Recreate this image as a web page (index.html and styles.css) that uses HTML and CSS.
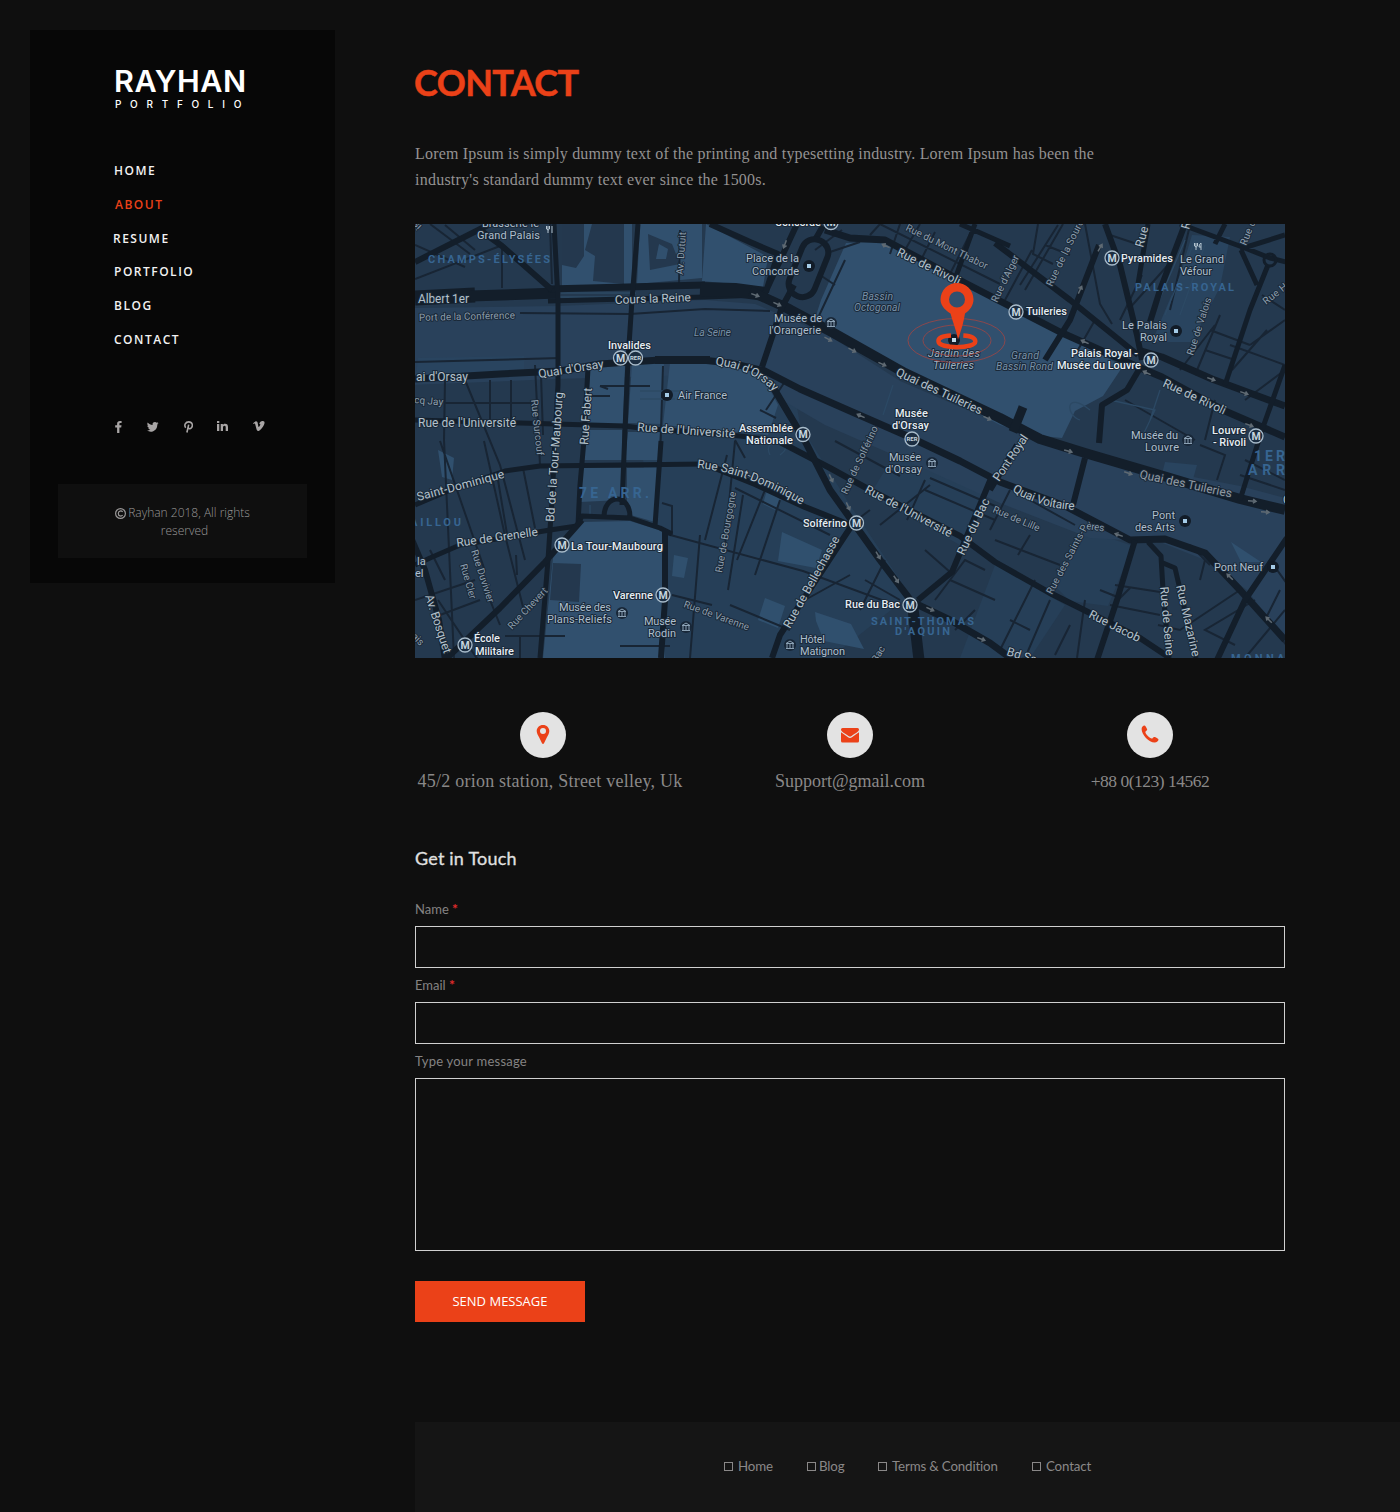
FILE: index.html
```html
<!DOCTYPE html>
<html lang="en">
<head>
<meta charset="utf-8">
<title>Rayhan Portfolio - Contact</title>
<link rel="stylesheet" href="styles.css">
</head>
<body>
<div class="page">
  <aside class="sidebar">
    <a class="logo" href="#">
      <span class="logo-name">RAYHAN</span>
      <span class="logo-sub">PORTFOLIO</span>
    </a>
    <nav class="menu">
      <a href="#">HOME</a>
      <a href="#" class="active">ABOUT</a>
      <a href="#" class="resume">RESUME</a>
      <a href="#">PORTFOLIO</a>
      <a href="#">BLOG</a>
      <a href="#">CONTACT</a>
    </nav>
    <div class="social">
      <svg width="7" height="12" viewBox="0 0 7 12"><path d="M6.600 0v2H5.400c-.8 0-1 .4-1 1v1.300h2.100l-.3 2.100H4.400V12H2.100V6.400H.2V4.300h1.900V2.700C2.100.9 3.200 0 4.900 0z"/></svg>
      <svg width="12" height="10" viewBox="0 0 12 10"><path d="M11.500 1.200c-.3.500-.7.900-1.200 1.200.2 4.300-3 7.300-6.600 7.300C2.300 9.700 1.100 9.300 0 8.600c1.300.1 2.400-.2 3.400-1-1-.1-1.900-.7-2.200-1.600h1C1 5.700.3 4.800.3 3.600l1 .3C.2 3 .1 1.700.7.600c1.300 1.500 2.900 2.300 4.900 2.400C5.200 1.200 6.400 0 8 0c.7 0 1.300.3 1.700.7L11.200.2c-.2.500-.5.900-1 1.200z"/></svg>
      <svg width="9" height="12" viewBox="0 0 9 12"><path fill="none" stroke="#a8a5a5" stroke-width="1.600" d="M1.700 6.700C-.2 4.300 1.400.9 4.800.9c3.600 0 4.400 3.800 2.600 5.900-1.300 1.500-2.900.9-3-.1M4.700 3.600 2.900 11.500"/></svg>
      <svg class="raised" width="11" height="10" viewBox="0 0 11 10"><path d="M0 0h2.300v2H0zM0 3h2.300v7H0zM3.700 3h2.200v.9C6.400 3.200 7 2.800 8 2.800c2.200 0 3 1.200 3 3.300V10H8.700V6.500c0-1-.2-1.700-1.200-1.700S6 5.500 6 6.500V10H3.700z"/></svg>
      <svg class="raised" width="12" height="10" viewBox="0 0 12 10"><path d="M0 2.300 2.700.2C4 0 4.500.8 4.700 2l.6 3.200c.2 1 .6 1 1.200 0 1-1.600 1.200-2.400-.3-2C6.800.9 8.200-.1 9.900 0c2 .2 2 2.100 1 4.100C9.700 6.500 8 8.500 6.500 9.600c-1.300.9-2.500.3-2.900-1L2.200 3.200C2 2.400 1.500 2.400.6 3z"/></svg>
    </div>
    <p class="copyright"><svg width="11" height="11" viewBox="0 0 11 11"><circle cx="5.500" cy="5.500" r="4.900"/><path d="M7.600 4C6.600 2.400 3.300 2.600 3.300 5.500s3.300 3.100 4.300 1.500"/></svg> Rayhan 2018, All rights<br><span>reserved</span></p>
  </aside>

  <main class="main">
    <div class="content">
      <h1>CONTACT</h1>
      <p class="intro"><span class="l1">Lorem Ipsum is simply dummy text of the printing and typesetting industry. Lorem Ipsum has been the</span><br><span class="l2">industry's standard dummy text ever since the 1500s.</span></p>

      <svg class="map" width="870" height="434" viewBox="415 224 870 434">
        <defs>
          <g id="metro"><circle r="7" fill="#1c2e42" stroke="#a9bccb" stroke-width="1.300"/><text class="badge" x="-4.500" y="3.700" textLength="9">M</text></g>
          <g id="rer"><circle r="7" fill="#1c2e42" stroke="#a9bccb" stroke-width="1.300"/><text class="badge rer" x="-5.500" y="2.300" textLength="11" lengthAdjust="spacingAndGlyphs">RER</text></g>
          <g id="spot"><circle r="6" fill="#121c28"/><path fill="#a5cce8" d="M-2-2h4v4h-4z"/></g>
          <g id="museum"><circle r="6" fill="#182738"/><path fill="none" stroke="#8ca2b5" d="M-4-1.500 0-4l4 2.500zM-3-1v4M0-1v4M3-1v4M-4 3.500h8"/></g>
          <g id="arrow"><path fill="none" stroke="#5f6a73" stroke-width="1.500" d="M-4 0h7M1-2l3 2-3 2"/></g>
        </defs>
        <path fill="#24394f" d="M415 224h870v434H415z"/>
        <!-- blocks -->
        <g fill="#263f58">
          <path d="M635 365h155l10 60 50 80 60 90-80 63H660z"/>
          <path d="M900 445l90 40-30 60-90-50zM1085 530l48 16-25 60-38-5-15-15zM995 565l70 40-35 53h-70z"/>
        </g>
        <!-- river -->
        <path fill="#29415b" d="M415 308l143-2 147-6 50 4 75 32 70 45 100 43 85 32 155 30 45 12v142l-38-50-42-30-45-18-70-4-90-35-95-43-80-35-65-38-60-12-145 4-143 6z"/>
        <!-- parks and squares -->
        <g fill="#31506e">
          <path d="M562 224h70v60l-70 5zM640 224h62v54l-65 6zM706 224l62 33-5 30-61-6zM846 243l40-1 79 42 80 42 78 40-20 30-28 15-13 27-30-3-32-10-90-47-97-53 8-25zM590 370l35-6-2 60h-37zM632 364l32-2-3 62-33-1zM670 363h60l30 8 18 34-10 30-105-10zM584 430h38v30h-40zM628 432h32l-2 28h-33zM581 468h40v32l-41 2zM627 468h32l-4 54-28-8zM580 522l50-1 32 10 3 127H543l10-100z"/>
        </g>
        <path fill="#29445f" d="M418 358l106-2v15l-108 4zM1165 462l32 3-7 25-30-8zM1180 275l12-40 38 2-10 50-28 55h-40z"/>
        <path fill="#30506e" d="M782 532l40 18-6 18-38-7zM765 598l20 8-7 22-20-8zM815 612l36 12 13 25-40-8-8-20zM767 490l14 10-6 10-12-6zM674 555l14 3-4 20-12-2zM1231 542l30 20h-20zM438 450l16 8-2 22-10-3z"/>
        <path fill="#24384e" d="M562 224h22v32l-8 12-14-3zM592 224h32v60l-31-3 2-25-10-6zM648 234l24 10 8 20-30 6zM553 563l28 1-2 38-29-2z"/>
        <path fill="#31506e" d="M659 244l9 5-2 10h-10z"/>
        <!-- side streets -->
        <g fill="none" stroke="#182534" stroke-width="2">
          <path d="M415 245l50 22M500 246l-85 33M502 246v42M550 224l2 60M430 224l40 30M445 225l30 25M680 230l-1 55M415 362l145-4M520 313l110 1 75-5 65 2M445 380l-1 60 10 218M465 380l35 85 25 95M490 380v45M511 380v40M535 365l5 100M445 403h90M440 441l45 130M484 441l20 90 20 80M523 468l12 60M498 480l10 60M516 555l1 20M438 600l40 60M430 550l15 30M480 575l20 50M415 600l60-20M440 615l40-15M505 636h60M520 636v22"/>
          <path d="M541 375l2 60M600 386l8 3M590 396h20M662 503l10 3v30M663 366l-3 95M663 533l140 38 95 35M700 535l-10 123M735 441l-10 105M765 490l-28 70M780 500l-25 75M735 488l95 47M705 540l22-85M730 605l60 25M728 590l15-95M620 646h50M672 595l40 10M600 386h50"/>
          <path d="M790 305l20 15M815 250l27-20M820 275l15 10M830 252l30-10M845 260l-28 60M870 235l10-11M900 224l-10 30M905 250l15-26M920 262l15-30M950 274l25-50M880 224l120 60M760 410l16 8M735 440l10 18M766 410l20-30M835 441l65 35M925 480l-18 40M870 510l-20 15M880 525l50-40M925 490l70 30M930 478l65 28M850 575l-45 25M865 580l35 20M885 560l-25 50M925 550l25 22M935 600l30-40 20 10M950 580l45 20M975 610l-20 20"/>
          <path d="M1005 300l27-50M1025 290l38-66M1085 224l15 80 12 20M1038 224l-5 30 20 10M1058 225l-38 60M1120 320l22-45M1110 235l30 10M1045 245l25 10M1128 310l40-45M1170 310l20-85M1215 325l-35 45M1210 330l40 15M1205 350l30 10M1195 375l25-60M1250 345l35-25M1230 345l55 20M1232 370l35-40M1215 400l-10 40M1245 400l40-30M1262 295l23 15M1075 355l20-35M1125 400l70 40M1200 445l25 10-8 25M1240 475l45 15M1245 460l40 20"/>
          <path d="M995 540l65 25M1010 490l-20 40M1030 535l-12 20M1030 500l45 25M1115 585l45 7M1110 605l50 10M1240 590l-60 40-22-5M1255 600l-50 30 30 15M1260 610l30 40M1270 560l25 35M1285 610l-40 48M1050 600l-25 58M1010 620l20 10M1000 650l35-70M1085 600l-8 58M1070 625l-15 30M1100 590l20 8 10-10M1205 560l-5 20M1280 590l-15 30M1190 545l20 20"/>
        </g>
        <g fill="none" stroke="#2c4964" stroke-width="1.300">
          <path d="M560 297h75M561 293h75M1110 400l45 10-12 25M1090 410c-25-20-25 5-10 10M1160 390l-10 30M770 455c-10-20 30-15 10 0M893 385l-10 30M1185 240l-30 70M1195 240l-30 75M1205 245l-25 70M640 391h40M640 399h35M590 505v10"/>
        </g>
        <!-- main roads -->
        <g fill="none" stroke="#131e2a" stroke-width="6" stroke-linejoin="round">
          <path stroke-width="15" d="M415 298l60-3"/><path stroke-width="11" d="M470 296l88-3"/>
          <path stroke-width="7" d="M548 289l157-4"/><path stroke-width="5" d="M548 301l157-4 55-2"/>
          <path stroke-width="14" d="M700 289l35 1 30 4"/>
          <path stroke-width="10" d="M750 291l35 16 45 24 75 42 95 45 40 21 45 14 75 22 80 24 45 11"/>
          <path stroke-width="7" d="M415 379l85-5 60-3 40-7 60-4h42l28 3 35 8 35 18 50 22 55 24 55 26 40 21 65 24 65 34 35-1 40 14 35 37 45 50"/>
          <path stroke-width="8" d="M655 360h55"/>
          <path stroke-width="5" d="M415 420l105 3 105 3 15 2 100 8 40 5"/>
          <path d="M780 442l50 26 40 22 90 46 35 26 55 31 90 45 30 20"/>
          <path stroke-width="5" d="M415 505l40-17 50-17 35-5 165-2"/><path d="M705 464l50 20 50 23 35 14 20 9"/>
          <path stroke-width="7" d="M770 382l35 59 25 49 25 35 25 35 32 42 38 18 40 23 30 22"/><path stroke-width="11" d="M912 600l7 60"/>
          <path stroke-width="5" d="M554 224l4 76v85l-3 55-3 60-4 60-8 98M638 224l-6 76-4 60-3 70-3 75M588 368l-4 72-4 45-2 40"/>
          <path stroke-width="5" d="M415 565l15-7 30-13 90-15 27-4 5-10 48 2 30 10 12 6M661 441l-6 85M604 517c0-24 26-24 26 0"/>
          <path d="M665 530v70l-4 58M582 520l-37 42-45 46-55 52M410 535l15 35 14 50 6 40"/>
          <path d="M918 600l34-28 40-96M852 525l-72 110-8 23M1017 445l-27 45M1085 458l-12 47"/>
          <path d="M415 262l75-38M480 230l22 16 50 44"/>
          <path d="M762 367l20-60 12-22M765 293l32-69M710 224l40 18 28 12-12 38M823 226l-8 14"/>
          <rect x="795" y="238" width="27" height="60" rx="13" transform="rotate(22 808 268)"/>
          <path stroke-width="7" d="M825 230l25 8 35 2 80 43 95 49 78 35 24 10 63 34 60 26M1138 350l24 7 50 22 73 27"/>
          <path d="M1105 224l15 41 17 70 5 25M995 243l75 57 68 55M1099 245l-29 75-25 40M1185 224l-25 66-10 32"/>
          <path stroke-width="5" d="M975 224l-20 55M960 224l50 22M1180 224l65 24 25 10 20 5M1240 249l45-14M1241 250l16 35M1268 265l-18 45-25 75M1285 365l-23 65-22 70M1148 224l-10 60M1225 224l-10 20"/>
          <circle cx="1270" cy="260" r="6" stroke-width="3"/>
          <path stroke-width="9" d="M1023 407l-10 25"/><path d="M1140 368l-13 22-25 15-3 38"/>
          <path d="M1287 538l-42 62-28 60M1135 540l-18 60-20 60"/>
          <path stroke-width="5" d="M1148 542l13 14 2 34 6 68M1163 563l12 5 21 90"/>
        </g>
        <g>
          <use href="#arrow" transform="translate(755 295) rotate(20)"/><use href="#arrow" transform="translate(777 304) rotate(25)"/>
          <use href="#arrow" transform="translate(828 339) rotate(28)"/><use href="#arrow" transform="translate(852 350) rotate(28)"/>
          <use href="#arrow" transform="translate(882 364) rotate(25)"/><use href="#arrow" transform="translate(987 418) rotate(25)"/>
          <use href="#arrow" transform="translate(861 416) rotate(205)"/><use href="#arrow" transform="translate(886 246) rotate(205)"/>
          <use href="#arrow" transform="translate(785 244) rotate(110)"/><use href="#arrow" transform="translate(1085 342) rotate(205)"/>
          <use href="#arrow" transform="translate(1080 290) rotate(-65)"/><use href="#arrow" transform="translate(1100 248) rotate(-60)"/>
          <use href="#arrow" transform="translate(1211 379) rotate(20)"/><use href="#arrow" transform="translate(1244 393) rotate(20)"/>
          <use href="#arrow" transform="translate(1147 373) rotate(205)"/><use href="#arrow" transform="translate(1249 425) rotate(20)"/>
          <use href="#arrow" transform="translate(1068 451) rotate(15)"/><use href="#arrow" transform="translate(1128 473) rotate(18)"/>
          <use href="#arrow" transform="translate(1252 501) rotate(5)"/><use href="#arrow" transform="translate(1265 512) rotate(5)"/>
          <use href="#arrow" transform="translate(831 478) rotate(65)"/><use href="#arrow" transform="translate(848 506) rotate(65)"/>
          <use href="#arrow" transform="translate(878 555) rotate(60)"/><use href="#arrow" transform="translate(896 579) rotate(55)"/>
          <use href="#arrow" transform="translate(930 609) rotate(25)"/><use href="#arrow" transform="translate(981 639) rotate(20)"/>
          <use href="#arrow" transform="translate(1119 535) rotate(200)"/><use href="#arrow" transform="translate(1230 577) rotate(225)"/><use href="#arrow" transform="translate(1269 620) rotate(225)"/>
        </g>
        <!-- district names -->
        <g class="district">
          <text x="428" y="263" textLength="122">CHAMPS-ÉLYSÉES</text>
          <text x="1135" y="291" textLength="99">PALAIS-ROYAL</text>
          <text x="871" y="625" textLength="103">SAINT-THOMAS</text>
          <text x="895" y="635" textLength="55">D'AQUIN</text>
          <text x="410" y="526" textLength="51">AILLOU</text>
          <text x="1231" y="662" textLength="60">MONNAI</text>
          <g class="large">
            <text x="579" y="498" textLength="70">7E ARR.</text>
            <text x="1254" y="461" textLength="31">1ER</text>
            <text x="1248" y="475" textLength="37">ARR</text>
          </g>
        </g>
        <!-- street names -->
        <g class="street">
          <text x="418" y="303" textLength="51">Albert 1er</text>
          <text transform="translate(615 304) rotate(-2)" textLength="76">Cours la Reine</text>
          <text x="416" y="381" textLength="52">ai d'Orsay</text>
          <text transform="translate(539 378) rotate(-9)" textLength="66">Quai d'Orsay</text>
          <text x="418" y="427" textLength="98">Rue de l'Université</text>
          <text transform="translate(637 431) rotate(4)" textLength="98">Rue de l'Université</text>
          <text transform="translate(554 522) rotate(-86)" textLength="130">Bd de la Tour-Maubourg</text>
          <text transform="translate(588 445) rotate(-86)" textLength="57">Rue Fabert</text>
          <path id="orsay" fill="none" d="M715 365q38 4 60 28"/>
          <text textLength="66"><textPath href="#orsay">Quai d'Orsay</textPath></text>
          <text transform="translate(896 255) rotate(26)" textLength="69">Rue de Rivoli</text>
          <text transform="translate(895 375) rotate(25)" textLength="94">Quai des Tuileries</text>
          <text transform="translate(1162 386) rotate(25)" textLength="68">Rue de Rivoli</text>
          <text transform="translate(1143 248) rotate(-75)" textLength="21">Rue</text>
          <text transform="translate(1189 230) rotate(-75)">Rue</text>
          <text transform="translate(418 501) rotate(-15)" textLength="90">Saint-Dominique</text>
          <text transform="translate(457 547) rotate(-8)" textLength="82">Rue de Grenelle</text>
          <text transform="translate(425 596) rotate(72)" textLength="61">Av. Bosquet</text>
          <path id="domin" fill="none" d="M697 468q50 4 106 38"/>
          <text textLength="112"><textPath href="#domin">Rue Saint-Dominique</textPath></text>
          <text transform="translate(864 492) rotate(28)" textLength="97">Rue de l'Université</text>
          <text transform="translate(964 556) rotate(-65)" textLength="61">Rue du Bac</text>
          <text transform="translate(790 629) rotate(-61)" textLength="103">Rue de Bellechasse</text>
          <text transform="translate(999 482) rotate(-56)" textLength="53">Pont Royal</text>
          <path id="volt" fill="none" d="M1012 491q28 18 66 19"/>
          <text textLength="66"><textPath href="#volt">Quai Voltaire</textPath></text>
          <text transform="translate(1139 478) rotate(12)" textLength="94" fill="#929ba3">Quai des Tuileries</text>
          <text transform="translate(1088 617) rotate(27)" textLength="56">Rue Jacob</text>
          <text transform="translate(1160 587) rotate(85)" textLength="69">Rue de Seine</text>
          <text transform="translate(1176 586) rotate(77)" textLength="73">Rue Mazarine</text>
          <text transform="translate(1006 655) rotate(17)">Bd Sa</text>
          <text x="1283" y="504">Q</text>
        </g>
        <g class="street minor">
          <text transform="translate(419 321) rotate(-1.500)" textLength="96">Port de la Conférence</text>
          <text transform="translate(683 275) rotate(-86)" textLength="43">Av. Dutuit</text>
          <text transform="translate(414 403) rotate(5)" textLength="29">cq Jay</text>
          <text transform="translate(531 400) rotate(84)" textLength="56">Rue Surcouf</text>
          <text transform="translate(905 230) rotate(26)" textLength="90">Rue du Mont Thabor</text>
          <text transform="translate(847 495) rotate(-65)" textLength="74">Rue de Solférino</text>
          <text transform="translate(997 303) rotate(-64)" textLength="51">Rue d'Alger</text>
          <text transform="translate(1052 287) rotate(-64)" textLength="73">Rue de la Sourd</text>
          <text transform="translate(1193 356) rotate(-72)" textLength="60">Rue de Valois</text>
          <text transform="translate(1266 305) rotate(-38)" textLength="28">Rue H</text>
          <text transform="translate(1246 246) rotate(-68)" textLength="26">Rue d</text>
          <text transform="translate(460 565) rotate(74)" textLength="36">Rue Cler</text>
          <text transform="translate(471 551) rotate(72)" textLength="55">Rue Duvivier</text>
          <text transform="translate(512 630) rotate(-47)" textLength="53">Rue Chevert</text>
          <text transform="translate(683 607) rotate(20)" textLength="69">Rue de Varenne</text>
          <text transform="translate(722 573) rotate(-80)" textLength="82">Rue de Bourgogne</text>
          <text transform="translate(992 512) rotate(23)" textLength="50">Rue de Lille</text>
          <text transform="translate(1052 595) rotate(-62)" textLength="77">Rue des Saints-P</text>
          <text transform="translate(1086 529) rotate(8)" textLength="18">ères</text>
          <text transform="translate(411 637) rotate(45)">ais</text>
          <text transform="translate(422 226) rotate(-135)">is</text>
          <text transform="translate(877 663) rotate(-60)">Bac</text>
        </g>
        <!-- places -->
        <g class="place">
          <text x="482" y="227" textLength="57">Brasserie le</text><text x="477" y="238.500" textLength="63">Grand Palais</text>
          <text x="678" y="399" textLength="49">Air France</text>
          <text x="746" y="262" textLength="53">Place de la</text><text x="752" y="275" textLength="47">Concorde</text>
          <text x="774" y="322" textLength="48">Musée de</text><text x="769" y="334" textLength="52">l'Orangerie</text>
          <text x="889" y="461" textLength="32">Musée</text><text x="885" y="473" textLength="37">d'Orsay</text>
          <text x="1180" y="263" textLength="44">Le Grand</text><text x="1180" y="275" textLength="32">Véfour</text>
          <text x="1122" y="329" textLength="45">Le Palais</text><text x="1140" y="341" textLength="27">Royal</text>
          <text x="1131" y="439" textLength="47">Musée du</text><text x="1145" y="451" textLength="34">Louvre</text>
          <text x="417" y="565">la</text><text x="415" y="577">el</text>
          <text x="559" y="611" textLength="52">Musée des</text><text x="547" y="623" textLength="65">Plans-Reliefs</text>
          <text x="644" y="625" textLength="32">Musée</text><text x="648" y="637" textLength="28">Rodin</text>
          <text x="800" y="643" textLength="25">Hôtel</text><text x="800" y="655" textLength="45">Matignon</text>
          <text x="1152" y="519" textLength="23">Pont</text><text x="1135" y="531" textLength="40">des Arts</text>
          <text x="1214" y="570.500" textLength="49">Pont Neuf</text>
        </g>
        <g class="place italic">
          <text x="694" y="335.500" textLength="37">La Seine</text>
          <text x="862" y="300" textLength="31">Bassin</text><text x="854" y="311" textLength="46">Octogonal</text>
          <text x="1011" y="359" textLength="28">Grand</text><text x="996" y="370" textLength="57">Bassin Rond</text>
        </g>
        <g class="station">
          <text x="608" y="348.500" textLength="43">Invalides</text>
          <text x="775" y="226" textLength="46">Concorde</text>
          <text x="895" y="417" textLength="33">Musée</text><text x="892" y="429" textLength="37">d'Orsay</text>
          <text x="739" y="432" textLength="54">Assemblée</text><text x="746" y="444" textLength="47">Nationale</text>
          <text x="1121" y="262" textLength="52">Pyramides</text>
          <text x="1026" y="315" textLength="41">Tuileries</text>
          <text x="1071" y="357" textLength="67">Palais Royal -</text><text x="1057" y="369" textLength="84">Musée du Louvre</text>
          <text x="1212" y="434" textLength="34">Louvre</text><text x="1213" y="446" textLength="33">- Rivoli</text>
          <text x="571" y="550" textLength="92">La Tour-Maubourg</text>
          <text x="613" y="599" textLength="40">Varenne</text>
          <text x="474" y="642" textLength="26">École</text><text x="475" y="655" textLength="39">Militaire</text>
          <text x="803" y="527" textLength="44">Solférino</text>
          <text x="845" y="608" textLength="55">Rue du Bac</text>
        </g>
        <use href="#metro" x="620.500" y="358"/><use href="#rer" x="635.500" y="358"/><use href="#rer" x="912" y="439"/>
        <use href="#metro" x="831" y="222.500"/><use href="#metro" x="803" y="434.500"/><use href="#metro" x="1112" y="258"/>
        <use href="#metro" x="1016" y="312"/><use href="#metro" x="1151" y="360"/><use href="#metro" x="1256" y="436"/>
        <use href="#metro" x="562" y="545"/><use href="#metro" x="663" y="595"/><use href="#metro" x="465" y="645"/>
        <use href="#metro" x="856.500" y="523"/><use href="#metro" x="910" y="605"/>
        <use href="#spot" x="667" y="395"/><use href="#spot" x="809" y="266"/><use href="#spot" x="1176" y="331"/>
        <use href="#spot" x="1185" y="521"/><use href="#spot" x="1273" y="567"/>
        <use href="#museum" x="831" y="323"/><use href="#museum" x="932" y="463"/><use href="#museum" x="1188" y="440"/>
        <use href="#museum" x="622" y="613"/><use href="#museum" x="686" y="627"/><use href="#museum" x="790" y="645"/>
        <path fill="none" stroke="#b4c4d0" d="M1194.500 243v3q2 2 3 0v-3M1196 243v7M1201 250v-7q-2 1-2 4h2M546.500 226v3q2 2 3 0v-3M548 226v7M552 233v-7"/>
        <!-- current location -->
        <circle cx="954" cy="340" r="6" fill="#121c28"/>
        <g class="place italic bright"><text x="928" y="357" textLength="52">Jardin des</text><text x="933" y="369" textLength="41">Tuileries</text></g>
        <g fill="none" stroke="#a84440" stroke-opacity=".75"><ellipse cx="957" cy="340.500" rx="34" ry="15.500"/><ellipse cx="956.500" cy="340.500" rx="48.500" ry="22"/></g>
        <path fill="none" stroke="#eb4118" stroke-width="4.500" d="M951 335.500C942 336 938 338 938.500 341.500 939 349 975 349 975.300 341.500c0-3.500-4-5.500-12-6"/>
        <path fill="#c2d9e8" d="M952 338h4v4h-4z"/>
        <path fill="#eb4118" fill-rule="evenodd" d="M957 283a16.500 16.500 0 0 1 16.500 16.500c0 6-4 11-8.500 14-1.500 9-3.500 16-7 26-2-10-5.500-18-7.500-26-4-2.500-10-7-10-14A16.500 16.500 0 0 1 957 283zm0 8.500a8 8 0 1 0 0 16 8 8 0 1 0 0-16z"/>
      </svg>

      <div class="info">
        <div class="info-item address">
          <span class="circle"><svg width="14" height="19" viewBox="0 0 14 19"><path fill-rule="evenodd" d="M7 0c3.700 0 6.300 2.700 6.300 6 0 2.500-1.500 4.500-2.500 6.600L8 18.300c-.5.800-1.500.8-2 0L3.200 12.600C2.200 10.500.7 8.500.7 6 .7 2.700 3.300 0 7 0zm0 3.100a3 3 0 1 0 0 6 3 3 0 1 0 0-6z"/></svg></span>
          <span class="t-address">45/2 orion station, Street velley, Uk</span>
        </div>
        <div class="info-item mail">
          <span class="circle"><svg width="18" height="15" viewBox="0 0 18 15"><path d="M1.500 0h15Q18 0 18 1.500C18 3.200 15.500 4.700 10.500 8 9.500 8.800 8.500 8.800 7.500 8 2.500 4.700 0 3.200 0 1.500Q0 0 1.500 0zM0 4.300c2 1.600 4.500 3 6.700 4.700 1.800 1.300 2.800 1.300 4.600 0 2.200-1.700 4.700-3.100 6.700-4.700v8.700q0 1.500-1.500 1.500h-15Q0 14.500 0 13z"/></svg></span>
          <span class="t-mail">Support@gmail.com</span>
        </div>
        <div class="info-item phone">
          <span class="circle"><svg width="18" height="18" viewBox="0 0 18 18"><path d="M.6 4C.6 1.800 2.300.5 3.300.5c1.200 0 1.600 1.400 2.700 3.500.8 1.500-1.600 1.800-1.600 3.300 0 1.700 4.600 6.300 6.300 6.300 1.300 0 1.600-2.400 3.200-1.500 2.300 1.200 3.600 1.600 3.600 2.700 0 1-1.700 2.700-3.900 2.700C7.900 17.500.6 9.800.6 4z"/></svg></span>
          <span class="t-phone">+88 0(123) 14562</span>
        </div>
      </div>

      <form class="form">
        <h2>Get in Touch</h2>
        <label for="name">Name <i>*</i></label>
        <input id="name" type="text">
        <label for="email">Email <i>*</i></label>
        <input id="email" type="text">
        <label for="message" class="wide">Type your message</label>
        <textarea id="message"></textarea>
        <button type="button">SEND MESSAGE</button>
      </form>
    </div>

    <footer class="footer">
      <a href="#" class="f-home"><span class="box"></span>Home</a>
      <a href="#" class="f-blog"><span class="box"></span>Blog</a>
      <a href="#" class="f-terms"><span class="box"></span>Terms &amp; Condition</a>
      <a href="#" class="f-contact"><span class="box"></span>Contact</a>
    </footer>
  </main>
</div>
</body>
</html>
```
FILE: styles.css
```css
* { box-sizing: border-box; }
body { margin: 0; background: #0f0f0f; font-family: Lato, sans-serif; color: #8a8888; }
a { color: inherit; text-decoration: none; }
h1, h2, p { margin: 0; font-weight: normal; }
.page { display: flex; align-items: flex-start; gap: 80px; padding: 30px 0 0 30px; height: 1512px; overflow: hidden; }

.sidebar { width: 305px; height: 553px; background: #070707; padding: 37px 28px 25px; flex: none; display: flex; flex-direction: column; }
.logo { display: flex; flex-direction: column; color: #fff; padding-left: 56px; font-family: Inter, sans-serif; }
.logo-name { font-size: 30.5px; line-height: 28px; height: 29px; font-weight: 600; letter-spacing: .5px; white-space: nowrap; }
.logo-sub { font-size: 10px; line-height: 12px; margin-top: 2px; padding-left: 1px; font-weight: 500; letter-spacing: 8.700px; white-space: nowrap; }
.menu { display: flex; flex-direction: column; padding-left: 56px; margin-top: 44px; font: 600 12px/33.750px "Open Sans", sans-serif; letter-spacing: 1.500px; color: #f2f2f2; }
.menu .active { color: #eb4118; margin-left: 1px; }
.menu .resume { margin-left: -1px; }
.social { display: flex; align-items: center; height: 14px; margin: 63px 0 0 57px; fill: #a8a5a5; }
.social svg { margin-right: 24.800px; flex: none; }
.social .raised { margin-bottom: 2px; }
.copyright { margin-top: auto; height: 74px; background: #0f0f0f; text-align: center; padding-top: 20px; font: 300 12px/18px "Open Sans", sans-serif; color: #9a9898; }
.copyright svg { vertical-align: -2px; margin-right: -1px; fill: none; stroke: #9a9898; stroke-width: 1.200px; }
.copyright span { padding-left: 4px; }

.main { flex: 1; height: 1482px; display: flex; flex-direction: column; }
.content { width: 870px; }
h1 { font-size: 36px; line-height: 44px; margin: 30px 0 0 -1px; font-weight: 700; letter-spacing: -.6px; color: #eb4118; white-space: nowrap; -webkit-text-stroke: .5px #eb4118; }
.intro { margin-top: 37px; height: 83px; font: 16px/26px "Liberation Serif", serif; color: #949292; white-space: nowrap; }
.l1 { letter-spacing: .195px; }
.l2 { letter-spacing: .235px; }
.map { display: block; }
.map text { font-family: Roboto, sans-serif; }
.map .street text, .map .place text, .map .station text { paint-order: stroke; stroke: #1a2939; stroke-width: 2px; stroke-linejoin: round; }
.map .street { font-size: 12px; fill: #b4c1cb; }
.map .minor { font-size: 10px; fill: #8c9dac; }
.map .place { font-size: 11px; fill: #aebfcd; }
.map .italic { font-style: italic; fill: #7890a7; font-size: 10.500px; }
.map .bright { fill: #9eb1c2; font-size: 11px; }
.map .station { font-size: 11px; fill: #e6edf2; font-weight: 500; }
.map .district { font-size: 11px; font-weight: 700; fill: #376591; }
.map .large { font-size: 14px; }
.map .badge { font-size: 10.500px; font-weight: 700; fill: #c6d5df; }
.map .rer { font-size: 6px; }

.info { display: flex; height: 92px; margin-top: 54px; }
.info-item { display: flex; flex-direction: column; align-items: center; font: 18px/24px "Liberation Serif", serif; white-space: nowrap; gap: 11px; }
.address { width: 270px; }
.mail { width: 330px; }
.phone { width: 270px; }
.t-address { letter-spacing: .23px; }
.t-phone { font-size: 17.500px; letter-spacing: -.5px; }
.circle { width: 46px; height: 46px; border-radius: 50%; background: #e3e3e3; display: flex; align-items: center; justify-content: center; fill: #eb4118; }
.address .circle { margin-right: 14px; padding-bottom: 2px; }
.phone .circle { padding-bottom: 2px; padding-right: 1px; }

.form { display: flex; flex-direction: column; align-items: flex-start; }
h2 { font-size: 18px; line-height: 24px; margin: 42px 0 30px; color: #e0e0e0; letter-spacing: .2px; -webkit-text-stroke: .3px #e0e0e0; }
label { font-size: 13px; line-height: 18px; margin-bottom: 8px; color: #858383; }
label.wide { letter-spacing: .22px; }
label i { font-style: normal; font-weight: 700; font-size: 14px; line-height: 1; color: #e02b2b; }
input, textarea { display: block; width: 870px; height: 42px; margin: 0 0 8px; padding: 8px; border: 1px solid #d0d0d0; border-radius: 0; background: none; resize: none; outline: none; color: #ddd; }
textarea { height: 173px; margin-bottom: 30px; }
button { width: 170px; height: 41px; border: 0; padding: 0 0 1px; background: #eb4118; color: #fff; font: 13px "Open Sans", sans-serif; }

.footer { margin-top: auto; height: 90px; background: #151515; display: flex; align-items: center; padding: 0 0 2px 309px; font-size: 13.300px; letter-spacing: -.15px; color: #8a8888; }
.footer a { display: flex; align-items: center; gap: 5px; white-space: nowrap; }
.box { width: 9px; height: 9px; border: 1px solid #8a8888; }
.f-home { width: 83px; }
.f-blog { width: 71px; }
.footer .f-blog { gap: 3px; }
.f-terms { width: 154px; }
```
